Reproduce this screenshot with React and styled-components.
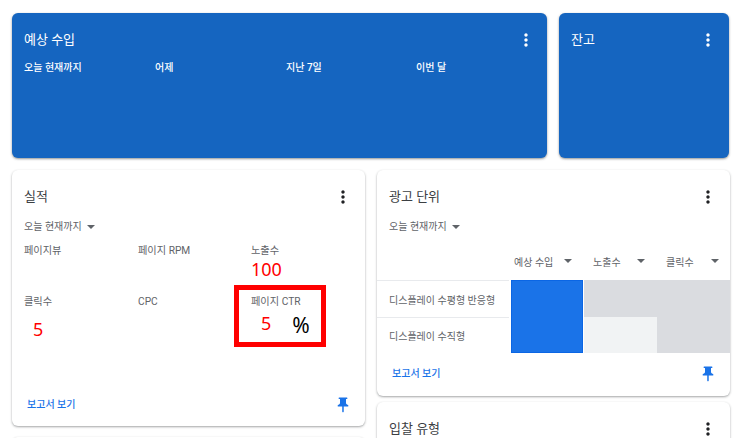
import React from "react";
import styled, { createGlobalStyle } from "styled-components";

const GlobalStyle = createGlobalStyle`
  html, body {
    margin: 0;
    padding: 0;
    width: 740px;
    height: 438px;
    overflow: hidden;
    background: #fff;
  }
  body {
    font-family: Roboto, "Noto Sans CJK KR", sans-serif;
    color: #3c4043;
  }
`;

const Page = styled.div`
  width: 740px;
  height: 438px;
  overflow: hidden;
  box-sizing: border-box;
  padding: 13px 10px 0 12px;
  display: flex;
  flex-direction: column;
  gap: 12px;
`;

const TopRow = styled.div`
  display: flex;
  gap: 12px;
`;

const BlueCard = styled.section`
  background: #1565c0;
  color: #fff;
  border-radius: 6px;
  box-shadow: 0 1px 2px rgba(60, 64, 67, 0.4), 0 1px 3px rgba(60, 64, 67, 0.2);
  height: 145px;
  box-sizing: border-box;
  padding: 16px 12px;
  flex: ${(p) => (p.$wide ? "0 0 535px" : "0 0 170px")};
  min-width: 0;
`;

const CardHead = styled.div`
  display: flex;
  justify-content: space-between;
  align-items: center;
  height: 22px;
`;

const Title = styled.h2`
  margin: 0;
  font-size: 13px;
  font-weight: 400;
  line-height: 22px;
  color: ${(p) => (p.$light ? "#fff" : "#3c4043")};
`;

const Kebab = styled.svg`
  width: 20px;
  height: 20px;
  margin-right: ${(p) => (p.$light ? "-1px" : "0")};
  fill: ${(p) => (p.$light ? "#fff" : "#202124")};
`;

const PeriodRow = styled.div`
  display: grid;
  grid-template-columns: 131px 131px 130px 1fr;
  margin-top: 9px;
  font-size: 10px;
  line-height: 16px;
  font-weight: 500;
`;

const Columns = styled.div`
  display: flex;
  gap: 12px;
  align-items: flex-start;
`;

const WhiteCard = styled.section`
  background: #fff;
  border-radius: 6px;
  box-shadow: 0 1px 2px rgba(60, 64, 67, 0.35), 0 1px 3px rgba(60, 64, 67, 0.15);
  box-sizing: border-box;
  flex: none;
  width: 353px;
  height: ${(p) => p.$height}px;
  display: flex;
  flex-direction: column;
`;

const Stack = styled.div`
  display: flex;
  flex-direction: column;
  gap: ${(p) => p.$gap}px;
  flex: none;
`;

const Body = styled.div`
  padding: 16px 12px 0;
`;

const Dropdown = styled.div`
  display: flex;
  align-items: center;
  gap: 5px;
  margin-top: 11px;
  font-size: 10px;
  line-height: 16px;
  color: #5f6368;
`;

const Caret = styled.span`
  display: inline-block;
  flex: none;
  width: 0;
  height: 0;
  border-left: 4px solid transparent;
  border-right: 4px solid transparent;
  border-top: 4px solid #5f6368;
`;

const Metrics = styled.div`
  position: relative;
  display: grid;
  grid-template-columns: 114px 113px 100px;
  grid-template-rows: 51px 60px;
  margin-top: 8px;
`;

const Metric = styled.div`
  font-size: 10.2px;
  line-height: 16px;
  color: #5f6368;
`;

const RedValue = styled.div`
  font-family: "Noto Sans", "Open Sans", sans-serif;
  font-size: 18px;
  line-height: 20px;
  color: #f00;
  padding-left: ${(p) => p.$indent || 0}px;
  margin-top: ${(p) => p.$top || 0}px;
`;

const ValueLine = styled.div`
  display: flex;
  align-items: center;
  margin-top: 1px;
`;

const Percent = styled.span`
  font-family: "Noto Sans", "Open Sans", sans-serif;
  font-size: 21px;
  font-weight: 400;
  line-height: 20px;
  color: #000;
  margin-left: 21px;
  margin-top: 4px;
`;

const Highlight = styled.div`
  position: absolute;
  left: 210px;
  top: 42px;
  width: 92px;
  height: 62px;
  box-sizing: border-box;
  border: 5px solid #f00;
  pointer-events: none;
`;

const Footer = styled.div`
  margin-top: auto;
  display: flex;
  justify-content: space-between;
  align-items: center;
  padding: 0 13px ${(p) => p.$bottom}px 15px;
`;

const ReportLink = styled.a`
  font-size: 10px;
  font-weight: 500;
  line-height: 24px;
  color: #1a73e8;
  text-decoration: none;
`;

const Pin = styled.svg`
  width: 18px;
  height: 18px;
  fill: #1a73e8;
`;

const HeatHead = styled.div`
  display: grid;
  grid-template-columns: 133px 73px 73px 74px;
  margin-top: 14px;
  padding-bottom: 7px;
  align-items: center;
`;

const HeatLabel = styled.div`
  display: flex;
  align-items: center;
  justify-content: space-between;
  height: 24px;
  padding: 0 11px 0 ${(p) => p.$indent}px;
  font-size: 10px;
  color: #5f6368;
`;

const HeatGrid = styled.div`
  display: grid;
  grid-template-columns: 134px 73px 73px 73px;
  grid-template-rows: 37px 36px;
`;

const RowName = styled.div`
  grid-column: 1;
  grid-row: ${(p) => p.$row};
  display: flex;
  align-items: center;
  margin-right: 2px;
  padding-left: 12px;
  font-size: 10px;
  white-space: nowrap;
  color: #5f6368;
  border-top: 1px solid #e8eaed;
`;

const HeatCell = styled.div`
  grid-column: ${(p) => p.$col};
  grid-row: ${(p) => p.$row};
  background: ${(p) => p.$color};
  border: ${(p) => (p.$outlined ? "1px solid #0b66e4" : "none")};
  margin-right: ${(p) => (p.$outlined ? "1px" : "0")};
`;

const DotsIcon = ({ light }) => (
  <Kebab $light={light} viewBox="0 0 24 24">
    <path d="M12 8c1.1 0 2-.9 2-2s-.9-2-2-2-2 .9-2 2 .9 2 2 2zm0 2c-1.1 0-2 .9-2 2s.9 2 2 2 2-.9 2-2-.9-2-2-2zm0 6c-1.1 0-2 .9-2 2s.9 2 2 2 2-.9 2-2-.9-2-2-2z" />
  </Kebab>
);

const PinIcon = () => (
  <Pin viewBox="0 0 24 24">
    <path d="M16 9V4h1c.55 0 1-.45 1-1s-.45-1-1-1H7c-.55 0-1 .45-1 1s.45 1 1 1h1v5c0 1.66-1.34 3-3 3v2h5.97v7l1 1 1-1v-7H19v-2c-1.66 0-3-1.34-3-3z" />
  </Pin>
);

export default function App() {
  return (
    <>
      <GlobalStyle />
      <Page>
        <TopRow>
          <BlueCard $wide>
            <CardHead>
              <Title $light>예상 수입</Title>
              <DotsIcon light />
            </CardHead>
            <PeriodRow>
              <span>오늘 현재까지</span>
              <span>어제</span>
              <span>지난 7일</span>
              <span>이번 달</span>
            </PeriodRow>
          </BlueCard>
          <BlueCard>
            <CardHead>
              <Title $light>잔고</Title>
              <DotsIcon light />
            </CardHead>
          </BlueCard>
        </TopRow>
        <Columns>
          <Stack $gap={11}>
            <WhiteCard $height={256}>
              <Body>
                <CardHead>
                  <Title>실적</Title>
                  <DotsIcon />
                </CardHead>
                <Dropdown>
                  오늘 현재까지 <Caret />
                </Dropdown>
                <Metrics>
                  <Metric>페이지뷰</Metric>
                  <Metric>페이지 RPM</Metric>
                  <Metric>
                    노출수
                    <RedValue>100</RedValue>
                  </Metric>
                  <Metric>
                    클릭수
                    <RedValue $indent={9} $top={9}>5</RedValue>
                  </Metric>
                  <Metric>CPC</Metric>
                  <Metric>
                    페이지 CTR
                    <ValueLine>
                      <RedValue $indent={10}>5</RedValue>
                      <Percent>%</Percent>
                    </ValueLine>
                  </Metric>
                  <Highlight />
                </Metrics>
              </Body>
              <Footer $bottom={9}>
                <ReportLink>보고서 보기</ReportLink>
                <PinIcon />
              </Footer>
            </WhiteCard>
            <WhiteCard $height={40} />
          </Stack>
          <Stack $gap={6}>
            <WhiteCard $height={226}>
              <Body>
                <CardHead>
                  <Title>광고 단위</Title>
                  <DotsIcon />
                </CardHead>
                <Dropdown>
                  오늘 현재까지 <Caret />
                </Dropdown>
              </Body>
              <HeatHead>
                <span />
                <HeatLabel $indent={4}>예상 수입 <Caret /></HeatLabel>
                <HeatLabel $indent={10}>노출수 <Caret /></HeatLabel>
                <HeatLabel $indent={10}>클릭수 <Caret /></HeatLabel>
              </HeatHead>
              <HeatGrid>
                <RowName $row={1}>디스플레이 수평형 반응형</RowName>
                <RowName $row={2}>디스플레이 수직형</RowName>
                <HeatCell $col={2} $row="1 / span 2" $color="#1a73e8" $outlined />
                <HeatCell $col="3 / span 2" $row={1} $color="#dadce0" />
                <HeatCell $col={3} $row={2} $color="#f1f3f4" />
                <HeatCell $col={4} $row={2} $color="#dadce0" />
              </HeatGrid>
              <Footer $bottom={10}>
                <ReportLink>보고서 보기</ReportLink>
                <PinIcon />
              </Footer>
            </WhiteCard>
            <WhiteCard $height={60}>
              <Body>
                <CardHead>
                  <Title>입찰 유형</Title>
                  <DotsIcon />
                </CardHead>
              </Body>
            </WhiteCard>
          </Stack>
        </Columns>
      </Page>
    </>
  );
}
